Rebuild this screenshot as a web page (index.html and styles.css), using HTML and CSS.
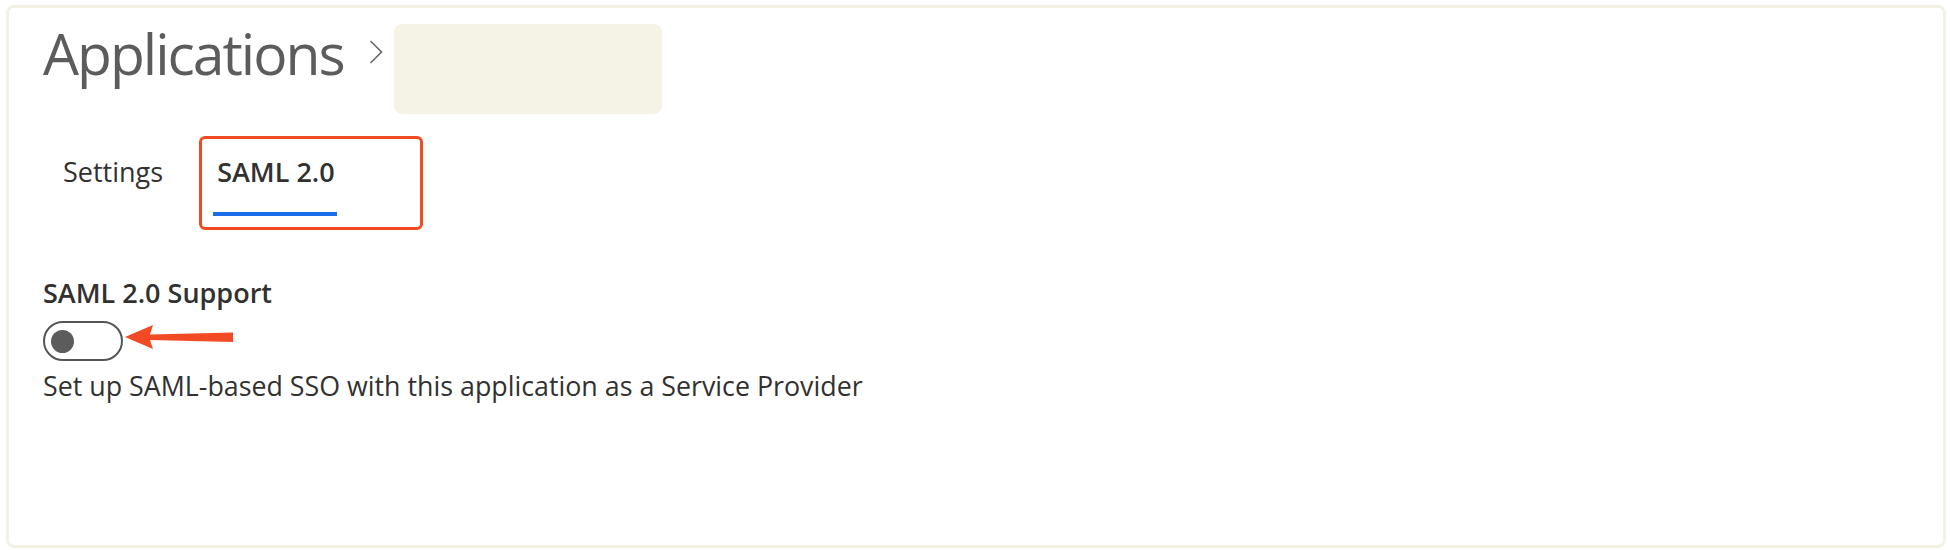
FILE: index.html
```html
<!DOCTYPE html>
<html lang="en">
<head>
    <meta charset="UTF-8">
    <meta name="viewport" content="width=device-width, initial-scale=1.0">
    <title>Applications - SAML 2.0</title>
    <link rel="stylesheet" href="styles.css">
</head>
<body>
    <div class="frame">
        <div class="header">
            <h1 class="title">Applications</h1>
            <svg class="chevron" width="14" height="24" viewBox="0 0 14 24">
                <path d="M1.5 1 L12.5 12 L1.5 23" fill="none" stroke="#666" stroke-width="1.6"/>
            </svg>
            <div class="app-name"></div>
        </div>

        <div class="tabs">
            <div class="tab">Settings</div>
            <div class="tab-highlight">
                <div class="tab active">
                    SAML 2.0
                    <div class="tab-bar"></div>
                </div>
            </div>
        </div>

        <div class="section">
            <div class="section-label">SAML 2.0 Support</div>
            <div class="toggle-row">
                <div class="toggle"><span class="knob"></span></div>
                <svg class="arrow" width="110" height="26" viewBox="0 0 110 26">
                    <polygon points="0,13 28,1 25,10.5 108,8.5 108,18 25,16 28,25" fill="#f24a25"/>
                </svg>
            </div>
            <div class="section-desc">Set up SAML-based SSO with this application as a Service Provider</div>
        </div>
    </div>
</body>
</html>
```

FILE: styles.css
```css
body {
    margin: 0;
    padding: 5px 4px 2px 6px;
    font-family: "Open Sans", "Noto Sans", sans-serif;
    background-color: #ffffff;
    color: #323130;
}
.frame {
    height: 543px;
    box-sizing: border-box;
    border: 3px solid #f3f1e4;
    border-radius: 8px;
    padding: 16px 34px 0 34px;
}
.header {
    display: flex;
    align-items: flex-start;
}
.title {
    margin: 0;
    font-size: 57px;
    font-weight: 400;
    line-height: 58px;
    color: #5c5c5c;
    letter-spacing: -2px;
}
.chevron {
    margin: 16px 0 0 25px;
}
.app-name {
    width: 268px;
    height: 90px;
    margin-left: 11px;
    background-color: #f5f2e6;
    border-radius: 8px;
}
.tabs {
    display: flex;
    align-items: flex-start;
    margin-top: 22px;
    padding-left: 20px;
}
.tab {
    font-size: 27px;
    line-height: 36px;
    padding-top: 18px;
    margin-right: 36px;
}
.tab-highlight {
    border: 3px solid #f04b23;
    border-radius: 6px;
    padding: 0 82px 11px 11px;
}
.tab.active {
    font-weight: 600;
    padding: 15px 3px 0 4px;
    margin-right: 0;
}
.tab-bar {
    height: 4px;
    margin: 22px -2px 0 -4px;
    background-color: #1b6ce8;
}
.section {
    margin-top: 45px;
}
.section-label {
    font-size: 27px;
    font-weight: 600;
    line-height: 36px;
}
.toggle-row {
    display: flex;
    align-items: flex-start;
    margin-top: 10px;
}
.toggle {
    width: 80px;
    height: 40px;
    box-sizing: border-box;
    border: 2px solid #555555;
    border-radius: 20px;
    display: flex;
    align-items: center;
    padding-left: 6px;
}
.knob {
    width: 23px;
    height: 23px;
    border-radius: 50%;
    background-color: #5c5c5c;
}
.arrow {
    margin: 3px 0 0 2px;
}
.section-desc {
    margin-top: 7px;
    font-size: 26.8px;
    line-height: 36px;
}
```
